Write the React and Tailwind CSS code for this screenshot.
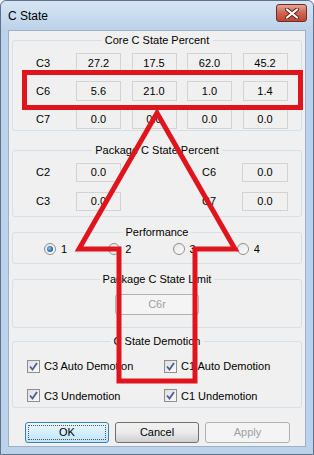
import React from 'react'

const font = { fontFamily: '"Liberation Sans", Arial, sans-serif' }

const Cell = ({ children, w = 'w-[45px]', h = 'h-[20px]' }) => (
  <div className={`${w} ${h} border border-[#d3d3d3] bg-[#f0f0f0] flex items-center justify-center text-[11px] text-black`}>
    {children}
  </div>
)

const Group = ({ title, className = '', children }) => (
  <div className={`relative border border-[#d5dfe5] rounded-[3px] ${className}`}>
    <span className="absolute -top-[8px] left-1/2 -translate-x-1/2 bg-[#f0f0f0] px-[3px] leading-[14px] whitespace-nowrap">
      {title}
    </span>
    {children}
  </div>
)

const Radio = ({ checked, label }) => (
  <div className="w-[66px] flex items-center gap-[5px]">
    <div className="w-[12px] h-[12px] rounded-full border border-[#8e8f8f] bg-gradient-to-br from-[#e6e6e6] to-[#fcfcfc] flex items-center justify-center">
      {checked && <div className="w-[6px] h-[6px] rounded-full bg-[radial-gradient(circle_at_40%_40%,#8fc4f0,#1a5b95_70%)]" />}
    </div>
    <span>{label}</span>
  </div>
)

const Check = ({ label }) => (
  <div className="w-[137px] flex items-center gap-[4px]">
    <div className="w-[13px] h-[13px] border border-[#8e8f8f] bg-gradient-to-br from-[#dedede] to-[#fbfbfb] flex items-center justify-center">
      <svg width="9" height="9" viewBox="0 0 9 9">
        <path d="M1 4.5 L3.5 7.5 L8 1" fill="none" stroke="#4a5f97" strokeWidth="1.8" />
      </svg>
    </div>
    <span>{label}</span>
  </div>
)

const App = () => {
  return (
    <div className="w-[314px] h-[455px] relative overflow-hidden text-[11px] text-black" style={font}>
      <div className="w-full h-full flex flex-col bg-[#bcd2ea] border border-[#5f7289] rounded-t-[6px]">
        {/* Title bar */}
        <div className="h-[29px] flex items-start justify-between pl-[7px] pr-[6px] bg-gradient-to-b from-[#d6e5f5] to-[#bcd2ea] rounded-t-[6px]">
          <span className="text-[12px] mt-[6px]">C State</span>
          <div className="mt-[3px] w-[31px] h-[18px] rounded-[3px] border border-[#6e2d27] bg-gradient-to-b from-[#e1a597] via-[#cf6552] to-[#c0442f] flex items-center justify-center">
            <svg width="14" height="11" viewBox="0 0 14 11">
              <path d="M2 1.5 L12 9.5 M12 1.5 L2 9.5" stroke="#5a2520" strokeWidth="4" strokeLinecap="round" />
              <path d="M2 1.5 L12 9.5 M12 1.5 L2 9.5" stroke="#ffffff" strokeWidth="2.2" strokeLinecap="round" />
            </svg>
          </div>
        </div>

        {/* Client area */}
        <div className="mx-[7px] h-[417px] bg-[#f0f0f0] border border-[#9cb0c8] px-[3px] flex flex-col">
          <Group title="Core C State Percent" className="mt-[9px] h-[91px] pt-[12px] flex flex-col gap-[8px]">
            {[
              ['C3', '27.2', '17.5', '62.0', '45.2'],
              ['C6', '5.6', '21.0', '1.0', '1.4'],
              ['C7', '0.0', '0.0', '0.0', '0.0'],
            ].map(([lbl, ...vals]) => (
              <div key={lbl} className="flex items-center pl-[23px]">
                <span className="w-[40px]">{lbl}</span>
                <div className="flex gap-[10.5px]">
                  {vals.map((v, i) => <Cell key={i}>{v}</Cell>)}
                </div>
              </div>
            ))}
          </Group>

          <Group title="Package C State Percent" className="mt-[19px] h-[67px] pt-[12px] flex flex-col gap-[10px]">
            {[
              ['C2', '0.0', 'C6', '0.0'],
              ['C3', '0.0', 'C7', '0.0'],
            ].map(([a, av, b, bv]) => (
              <div key={a} className="flex items-center pl-[23px]">
                <span className="w-[40px]">{a}</span>
                <Cell h="h-[19px]">{av}</Cell>
                <span className="ml-[81px] w-[40px]">{b}</span>
                <Cell h="h-[19px]" w="w-[46px]">{bv}</Cell>
              </div>
            ))}
          </Group>

          <Group title="Performance" className="mt-[15px] h-[32px] flex items-center pl-[31px] pt-[2px]">
            <Radio checked label="1" />
            <Radio label="2" />
            <Radio label="3" />
            <Radio label="4" />
          </Group>

          <Group title="Package C State Limit" className="mt-[15px] h-[49px] flex justify-center pt-[14px]">
            <div className="w-[84px] h-[21px] rounded-[3px] border border-[#adb2b5] bg-[#f4f4f4] flex items-center justify-center text-[#a0a0a0]">
              C6r
            </div>
          </Group>

          <Group title="C State Demotion" className="mt-[13px] h-[67px] pl-[14px] pt-[16px] flex flex-col gap-[13px]">
            <div className="flex">
              <Check label="C3 Auto Demotion" />
              <Check label="C1 Auto Demotion" />
            </div>
            <div className="flex">
              <Check label="C3 Undemotion" />
              <Check label="C1 Undemotion" />
            </div>
          </Group>

          <div className="mt-[14px] flex gap-[6px] pl-[13px]">
            <button className="w-[84px] h-[21px] rounded-[3px] border border-[#3c7fb1] bg-gradient-to-b from-[#eaf6fd] to-[#bee6fd] p-[2px]">
              <div className="w-full h-full border border-dotted border-[#555] flex items-center justify-center">OK</div>
            </button>
            <button className="w-[84px] h-[21px] rounded-[3px] border border-[#707070] bg-gradient-to-b from-[#f2f2f2] via-[#ebebeb] to-[#cfcfcf] flex items-center justify-center">
              Cancel
            </button>
            <button className="w-[85px] h-[21px] rounded-[3px] border border-[#adb2b5] bg-[#f4f4f4] text-[#a0a0a0] flex items-center justify-center">
              Apply
            </button>
          </div>
        </div>
      </div>

      {/* Red annotation overlay */}
      <svg className="absolute inset-0 pointer-events-none" width="314" height="455" viewBox="0 0 314 455">
        <rect x="24.5" y="72.5" width="276" height="35" fill="none" stroke="#e0141c" strokeWidth="5" />
        <path
          d="M157 113 L235 249 L195 249 L195 381 L119 381 L119 249 L79 249 Z"
          fill="none"
          stroke="#e0141c"
          strokeWidth="5"
          strokeLinejoin="miter"
        />
      </svg>
    </div>
  )
}

export default App
